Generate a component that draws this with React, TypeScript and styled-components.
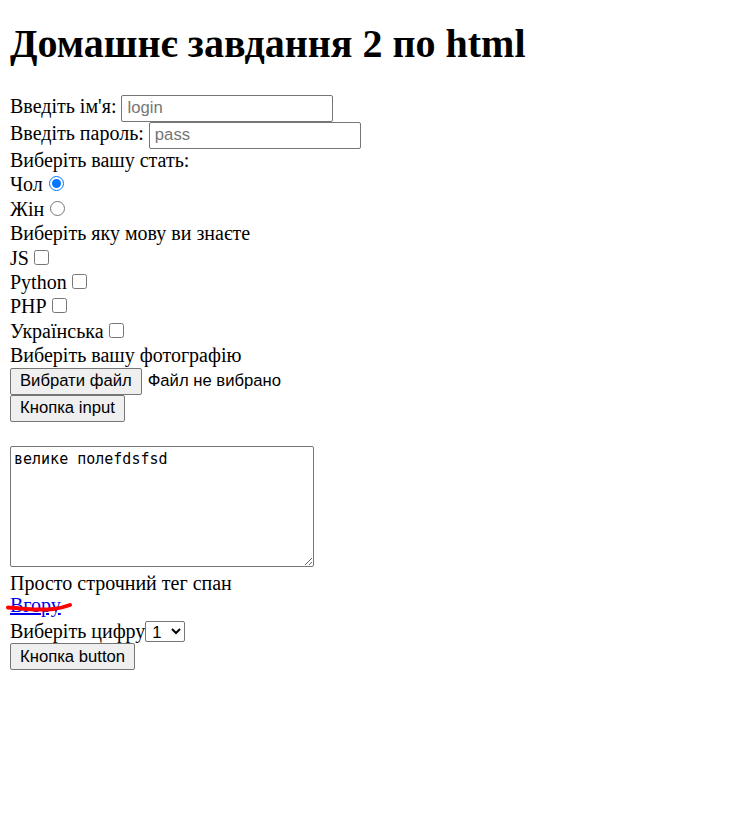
import React from "react";
import styled, { createGlobalStyle } from "styled-components";

const GlobalStyle = createGlobalStyle`
  html, body {
    margin: 0;
    padding: 0;
    background: #ffffff;
  }
  body {
    font-family: "Liberation Serif", "Times New Roman", serif;
    font-size: 20px;
    color: #000000;
  }
`;

const Page = styled.div`
  padding: 0 10px;
`;

const Title = styled.h1`
  margin: 21px 0 27px;
  font-family: "Liberation Serif", "Times New Roman", serif;
  font-size: 40px;
  line-height: 46px;
  font-weight: bold;
`;

const Form = styled.form`
  display: flex;
  flex-direction: column;
  align-items: flex-start;
`;

const InputRow = styled.div`
  display: flex;
  align-items: baseline;
  gap: 5px;
  height: 27px;
  line-height: 24.4px;
`;

const TextInput = styled.input`
  box-sizing: border-box;
  width: 212px;
  height: 27px;
  margin: 0;
  padding: 0 5px;
  border: 1px solid #767676;
  border-radius: 2px;
  font-family: "Liberation Sans", Arial, sans-serif;
  font-size: 16.67px;
  color: #000;
  background: #fff;
  &::placeholder {
    color: #757575;
  }
`;

const TextLine = styled.div`
  line-height: 24.4px;
  height: 24.4px;
  white-space: nowrap;
`;

const LinkLine = styled.div`
  position: relative;
  line-height: 21.4px;
  height: 21.4px;
  white-space: nowrap;
`;

const OptionRow = styled.label`
  display: block;
  line-height: 24.4px;
  height: 24.4px;
  white-space: nowrap;
`;

const Choice = styled.input<{ $gap: number }>`
  width: 15px;
  height: 15px;
  margin: 0 0 0 ${(p) => p.$gap}px;
  vertical-align: baseline;
`;

const Button = styled.button`
  box-sizing: border-box;
  height: 27px;
  margin: 0;
  padding: 0 9px;
  border: 1px solid #767676;
  border-radius: 2px;
  background: #efefef;
  color: #000;
  font-family: "Liberation Sans", Arial, sans-serif;
  font-size: 16.67px;
  white-space: nowrap;
`;

const FileRow = styled.div`
  display: flex;
  align-items: center;
  gap: 6px;
  height: 27px;
`;

const FileStatus = styled.span`
  font-family: "Liberation Sans", Arial, sans-serif;
  font-size: 16.67px;
`;

const Spacer = styled.div`
  height: 24.4px;
`;

const BigField = styled.textarea`
  box-sizing: border-box;
  width: 304px;
  height: 121px;
  margin: 0 0 4px;
  padding: 3px 3px;
  border: 1px solid #767676;
  border-radius: 2px;
  font-family: "DejaVu Sans Mono", "Liberation Mono", monospace;
  font-size: 15px;
  line-height: 18px;
  color: #000;
  background: #fff;
`;

const Link = styled.a`
  color: #0000ee;
  text-decoration: underline;
`;

const Scribble = styled.svg`
  position: absolute;
  left: -4px;
  top: 6px;
  width: 66px;
  height: 12px;
  pointer-events: none;
  overflow: visible;
`;

const SelectRow = styled.div`
  display: flex;
  align-items: flex-end;
  height: 26.6px;
  line-height: 24.4px;
  white-space: nowrap;
`;

const Select = styled.select`
  box-sizing: border-box;
  height: 21px;
  width: 40px;
  margin: 0 0 1.5px 0;
  padding: 0 0 0 2px;
  border: 1px solid #767676;
  border-radius: 2px;
  font-family: "Liberation Sans", Arial, sans-serif;
  font-size: 16.67px;
  color: #000;
  background: #fff;
`;

export default function App() {
  return (
    <Page>
      <GlobalStyle />
      <Title>Домашнє завдання 2 по html</Title>
      <Form onSubmit={(e) => e.preventDefault()}>
        <InputRow>
          Введіть ім'я:
          <TextInput type="text" placeholder="login" />
        </InputRow>
        <InputRow>
          Введіть пароль:
          <TextInput type="password" placeholder="pass" />
        </InputRow>
        <TextLine>Виберіть вашу стать:</TextLine>
        <OptionRow>
          Чол<Choice $gap={6} type="radio" name="sex" defaultChecked />
        </OptionRow>
        <OptionRow>
          Жін<Choice $gap={6} type="radio" name="sex" />
        </OptionRow>
        <TextLine>Виберіть яку мову ви знаєте</TextLine>
        <OptionRow>
          JS<Choice $gap={5} type="checkbox" />
        </OptionRow>
        <OptionRow>
          Python<Choice $gap={5} type="checkbox" />
        </OptionRow>
        <OptionRow>
          PHP<Choice $gap={5} type="checkbox" />
        </OptionRow>
        <OptionRow>
          Українська<Choice $gap={5} type="checkbox" />
        </OptionRow>
        <TextLine>Виберіть вашу фотографію</TextLine>
        <FileRow>
          <Button type="button">Вибрати файл</Button>
          <FileStatus>Файл не вибрано</FileStatus>
        </FileRow>
        <Button type="button">Кнопка input</Button>
        <Spacer />
        <BigField defaultValue="велике полеfdsfsd" />
        <TextLine>Просто строчний тег спан</TextLine>
        <LinkLine>
          <Link href="#top">Вгору</Link>
          <Scribble viewBox="0 0 66 12" aria-hidden="true">
            <path
              d="M2 6.5 C 12 7, 22 8.5, 32 8.5 S 52 8.5, 64 4"
              fill="none"
              stroke="#ff0000"
              strokeWidth="4"
              strokeLinecap="round"
            />
          </Scribble>
        </LinkLine>
        <SelectRow>
          Виберіть цифру
          <Select defaultValue="1">
            <option value="1">1</option>
            <option value="2">2</option>
            <option value="3">3</option>
          </Select>
        </SelectRow>
        <Button type="button">Кнопка button</Button>
      </Form>
    </Page>
  );
}
